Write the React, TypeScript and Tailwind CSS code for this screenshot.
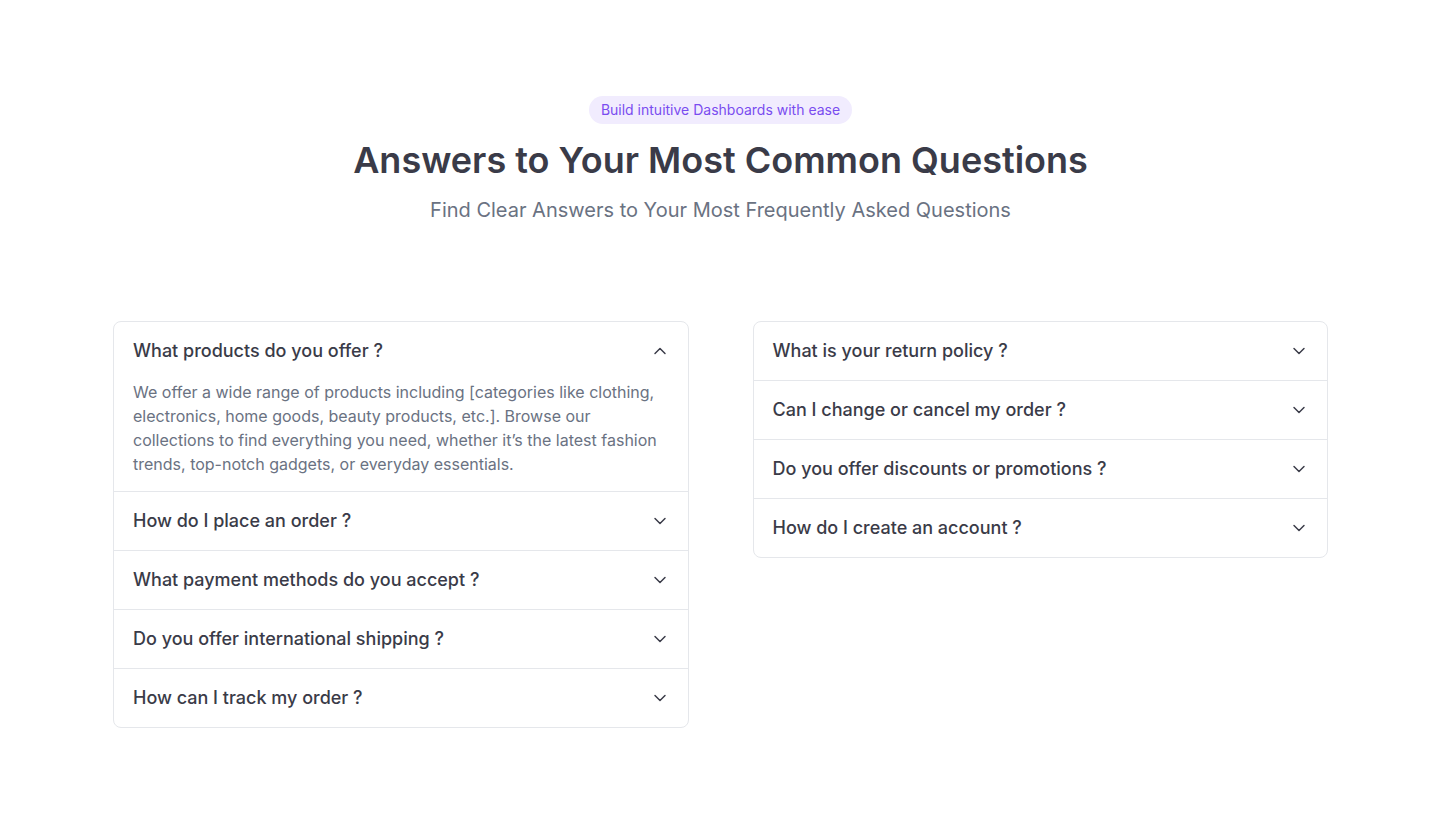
import { ChevronDown, ChevronUp } from "lucide-react";

const left = [
  {
    q: "What products do you offer ?",
    a: "We offer a wide range of products including [categories like clothing, electronics, home goods, beauty products, etc.]. Browse our collections to find everything you need, whether it’s the latest fashion trends, top-notch gadgets, or everyday essentials.",
    open: true,
  },
  { q: "How do I place an order ?" },
  { q: "What payment methods do you accept ?" },
  { q: "Do you offer international shipping ?" },
  { q: "How can I track my order ?" },
];

const right = [
  { q: "What is your return policy ?" },
  { q: "Can I change or cancel my order ?" },
  { q: "Do you offer discounts or promotions ?" },
  { q: "How do I create an account ?" },
];

type Item = { q: string; a?: string; open?: boolean };

function FaqCard({ items }: { items: Item[] }) {
  return (
    <div className="rounded-lg border border-gray-200 bg-white divide-y divide-gray-200">
      {items.map((item) => (
        <div key={item.q}>
          <button className="flex w-full items-center justify-between pl-[19px] pr-5 py-[15px] text-left">
            <span className="text-lg leading-7 font-medium text-[#3a3b48]">{item.q}</span>
            {item.open ? (
              <ChevronUp size={20} strokeWidth={1.75} className="text-[#3a3b48] -mr-[2px]" />
            ) : (
              <ChevronDown size={20} strokeWidth={1.75} className="text-[#3a3b48] -mr-[2px]" />
            )}
          </button>
          {item.open && item.a && (
            <p className="pl-[19px] pr-5 pb-[15px] text-base leading-6 text-gray-500">{item.a}</p>
          )}
        </div>
      ))}
    </div>
  );
}

export default function App() {
  return (
    <div className="min-h-screen bg-white font-['Inter',sans-serif] py-24">
      <div className="flex flex-col items-center text-center">
        <span className="rounded-full bg-[#f1ecfe] px-3 py-1 text-sm leading-5 text-[#7a4cf0]">
          Build intuitive Dashboards with ease
        </span>
        <h2 className="mt-4 text-4xl leading-10 font-semibold text-[#3a3b48]">
          Answers to Your Most Common Questions
        </h2>
        <p className="mt-4 text-xl leading-7 text-gray-500">
          Find Clear Answers to Your Most Frequently Asked Questions
        </p>
      </div>
      <div className="mx-auto mt-[97px] grid w-[1215px] grid-cols-2 items-start gap-16">
        <FaqCard items={left} />
        <FaqCard items={right} />
      </div>
    </div>
  );
}
